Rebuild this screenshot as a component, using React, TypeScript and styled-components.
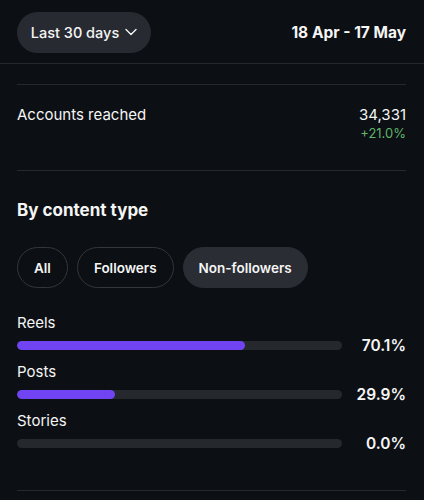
import React from "react";
import styled, { createGlobalStyle } from "styled-components";

const Global = createGlobalStyle`
  html, body { margin: 0; padding: 0; background: #0c0f13; }
  body { font-family: Inter, "Noto Sans", sans-serif; color: #f5f5f5; -webkit-font-smoothing: antialiased; }
`;

const Page = styled.div`
  width: 424px;
  height: 500px;
  overflow: hidden;
  background: #0c0f13;
`;

const Header = styled.header`
  height: 63px;
  display: flex;
  align-items: center;
  justify-content: space-between;
  padding: 0 18px 0 17px;
  border-bottom: 1px solid #24272c;
`;

const RangePill = styled.button`
  height: 41px;
  width: 134px;
  margin-top: 1px;
  border: none;
  border-radius: 21px;
  background: #272a30;
  color: #f5f5f5;
  font-family: inherit;
  font-size: 14.5px;
  font-weight: 500;
  display: flex;
  align-items: center;
  justify-content: center;
  gap: 6px;
  padding: 0;
`;

const DateText = styled.div`
  font-size: 15.5px;
  font-weight: 700;
  margin-top: 1px;
`;

const Body = styled.div`
  padding: 0 18px 0 17px;
`;

const Divider = styled.div<{ $top: number }>`
  height: 1px;
  background: #25282d;
  margin-top: ${(p) => p.$top}px;
`;

const MetricRow = styled.div`
  display: flex;
  justify-content: space-between;
  align-items: flex-start;
  margin-top: 20px;
`;

const MetricLabel = styled.div`
  font-size: 15px;
  line-height: 20px;
`;

const MetricValue = styled.div`
  display: flex;
  flex-direction: column;
  align-items: flex-end;
`;

const ValueText = styled.div`
  font-size: 15px;
  line-height: 20px;
`;

const Change = styled.div`
  font-size: 13px;
  line-height: 16px;
  color: #5fb56c;
`;

const SectionTitle = styled.h2`
  margin: 28px 0 0;
  font-size: 17px;
  line-height: 22px;
  font-weight: 700;
`;

const Chips = styled.div`
  display: flex;
  gap: 9px;
  margin-top: 26px;
`;

const Chip = styled.button<{ $active?: boolean }>`
  height: 41px;
  border-radius: 21px;
  padding: 0 ${(p) => (p.$active ? 15 : 16)}px;
  border: 1px solid ${(p) => (p.$active ? "#2a2d33" : "#33363b")};
  background: ${(p) => (p.$active ? "#2a2d33" : "transparent")};
  color: #f5f5f5;
  font-family: inherit;
  font-size: 13.5px;
  font-weight: 600;
`;

const Rows = styled.div`
  display: flex;
  flex-direction: column;
  gap: 7px;
  margin-top: 25px;
`;

const Row = styled.div`
  display: flex;
  flex-direction: column;
  gap: 2px;
`;

const RowLabel = styled.div`
  font-size: 15px;
  line-height: 20px;
`;

const BarLine = styled.div`
  display: flex;
  align-items: center;
  height: 20px;
`;

const Track = styled.div`
  flex: 1;
  height: 9px;
  border-radius: 4.5px;
  background: #25282d;
  overflow: hidden;
`;

const Fill = styled.div`
  height: 100%;
  border-radius: 4.5px;
  background: #7044f2;
`;

const Percent = styled.div`
  width: 64px;
  text-align: right;
  font-size: 15.5px;
  font-weight: 600;
`;

const Chevron = () => (
  <svg width="12" height="8" viewBox="0 0 12 8" fill="none">
    <path d="M1 1.5L6 6.5L11 1.5" stroke="#f5f5f5" strokeWidth="1.4" strokeLinecap="round" strokeLinejoin="round" />
  </svg>
);

const data = [
  { label: "Reels", pct: 70.1, fill: 70.1 },
  { label: "Posts", pct: 29.9, fill: 30 },
  { label: "Stories", pct: 0.0, fill: 0 },
];

export default function App() {
  return (
    <Page>
      <Global />
      <Header>
        <RangePill>
          Last 30 days <Chevron />
        </RangePill>
        <DateText>18 Apr - 17 May</DateText>
      </Header>
      <Body>
        <Divider $top={20} />
        <MetricRow>
          <MetricLabel>Accounts reached</MetricLabel>
          <MetricValue>
            <ValueText>34,331</ValueText>
            <Change>+21.0%</Change>
          </MetricValue>
        </MetricRow>
        <Divider $top={29} />
        <SectionTitle>By content type</SectionTitle>
        <Chips>
          <Chip>All</Chip>
          <Chip>Followers</Chip>
          <Chip $active>Non-followers</Chip>
        </Chips>
        <Rows>
          {data.map((d) => (
            <Row key={d.label}>
              <RowLabel>{d.label}</RowLabel>
              <BarLine>
                <Track>
                  <Fill style={{ width: `${d.fill}%` }} />
                </Track>
                <Percent>{d.pct.toFixed(1)}%</Percent>
              </BarLine>
            </Row>
          ))}
        </Rows>
        <Divider $top={37} />
      </Body>
    </Page>
  );
}
